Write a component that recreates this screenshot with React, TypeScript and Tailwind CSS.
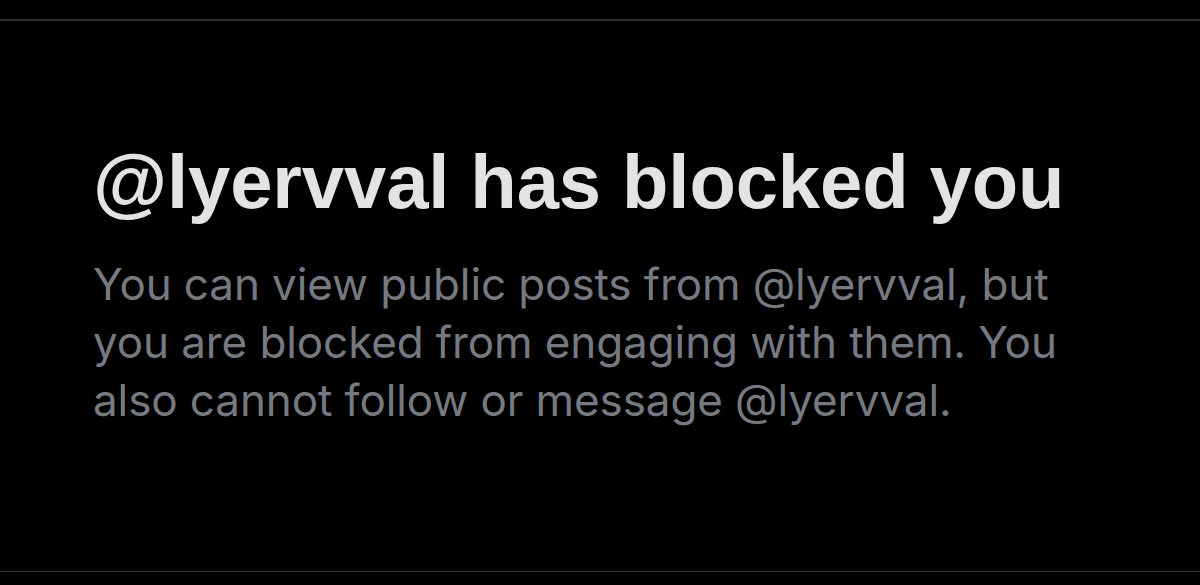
export default function App() {
  return (
    <div className="flex h-[585px] w-[1200px] flex-col bg-black">
      <div className="mt-[19px] h-[2px] w-full bg-[#2a2c2e]" />
      <div className="flex flex-1 flex-col px-[93px] pt-[123px]">
        <h1
          className="text-[76px] font-bold leading-none tracking-[-0.1px] text-[#e1e3e4]"
          style={{ fontFamily: '"Liberation Sans", Arial, sans-serif' }}
        >
          @lyervval has blocked you
        </h1>
        <p
          className="mt-[35px] w-[1000px] text-[44px] leading-[58px] tracking-[-0.1px] text-[#767a80]"
          style={{ fontFamily: 'Inter, "Liberation Sans", sans-serif' }}
        >
          You can view public posts from @lyervval, but you are blocked from engaging with them. You also cannot follow or message @lyervval.
        </p>
      </div>
      <div className="mb-[13px] h-px w-full bg-[#2f3336]" />
    </div>
  );
}
